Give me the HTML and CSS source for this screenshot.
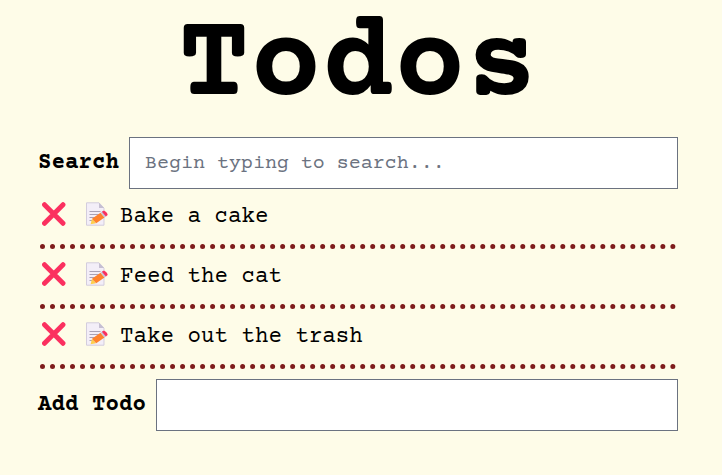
FILE: index.html
```html
<!DOCTYPE html>
<html lang="en">
<head>
<meta charset="utf-8">
<title>Todos</title>
<link rel="stylesheet" href="styles.css">
</head>
<body>
<svg class="defs" aria-hidden="true">
  <symbol id="cross" viewBox="0 0 24 24">
    <path d="M2.5 2.7 21 21.3M21 2.7 2.5 21.3" fill="none" stroke="#fb305f" stroke-width="4.9" stroke-linecap="round"/>
  </symbol>
  <symbol id="memo" viewBox="0 0 24 24">
    <path d="M1.5.8H14L19 6v17.2H1.5z" fill="#f3eef8" stroke="#d3cddd"/>
    <path d="M14 .8V6h5z" fill="#c6bfd2"/>
    <path d="M4.5 9.5h11M4.5 12.5h10M4.5 15.5h9M4.5 18.5h4" stroke="#aaa1b5" stroke-width="1.1"/>
    <path d="m5.6 22.3 1.4-5.6 4 4.6z" fill="#ffcf4a"/>
    <path d="m7 16.7 8.5-6 4 4.8-8.3 5.8z" fill="#ff822d"/>
    <path d="m15.5 10.7 2-1.5 4 4.8-2 1.5z" fill="#c9c2d6"/>
    <path d="m16.9 9.7 1.4-.9c1.5-.6 4.6 2.5 4.3 4.1l-1.7 1.5z" fill="#f92f60"/>
  </symbol>
</svg>
<main class="app">
  <h1 class="title">Todos</h1>
  <div class="field">
    <label class="label" for="search">Search</label>
    <input class="input" id="search" type="text" placeholder="Begin typing to search...">
  </div>
  <ul class="list">
    <li class="item"><svg class="icon cross"><use href="#cross"/></svg><svg class="icon memo"><use href="#memo"/></svg><span>Bake a cake</span></li>
    <li class="item"><svg class="icon cross"><use href="#cross"/></svg><svg class="icon memo"><use href="#memo"/></svg><span>Feed the cat</span></li>
    <li class="item"><svg class="icon cross"><use href="#cross"/></svg><svg class="icon memo"><use href="#memo"/></svg><span>Take out the trash</span></li>
  </ul>
  <div class="field">
    <label class="label" for="add">Add Todo</label>
    <input class="input" id="add" type="text">
  </div>
</main>
</body>
</html>
```
FILE: styles.css
```css
* { box-sizing: border-box; }
body {
  margin: 0;
  background: #fefce8;
  color: #000;
  font: 22.5px/30px "Courier Prime", "Liberation Mono", monospace;
}
.defs { display: none; }
.app { width: 640px; margin-left: 38px; }
.title {
  margin: 0;
  height: 137px;
  font-size: 120px;
  line-height: 136px;
  text-align: center;
}
.field { display: flex; align-items: center; height: 52px; }
.label { margin-right: 10px; font-weight: 700; white-space: nowrap; }
.input {
  flex: 1;
  min-width: 0;
  height: 52px;
  padding: 0 15px;
  border: 1px solid #6b7280;
  border-radius: 0;
  outline: 0;
  background: #fff;
  font: 20px/30px "Courier Prime", "Liberation Mono", monospace;
}
.input::placeholder { color: #6b7280; opacity: 1; }
.list { margin: 0; padding: 0 2px 10px; list-style: none; }
.item {
  display: flex;
  align-items: center;
  height: 60px;
  padding-left: 2px;
  border-bottom: 5px dotted #7f1d1d;
}
.icon { flex: none; width: 24px; height: 24px; margin-bottom: 5px; }
.memo { margin-left: 18.5px; margin-right: 11.5px; }
```
